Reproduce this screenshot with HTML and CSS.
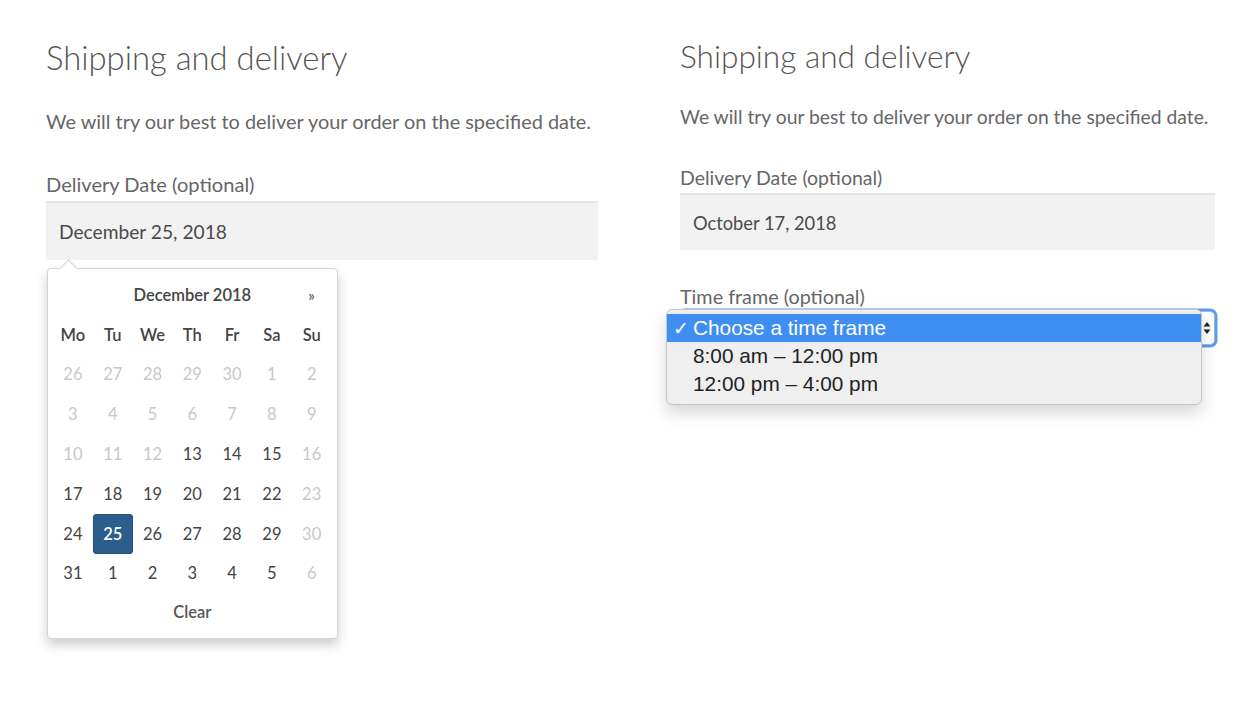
FILE: index.html
```html
<!DOCTYPE html>
<html>
<head>
<meta charset="utf-8">
<link rel="stylesheet" href="styles.css">
</head>
<body>
<div class="page">
  <section class="panel panel-left">
    <h2 class="title">Shipping and delivery</h2>
    <p class="intro">We will try our best to deliver your order on the specified date.</p>
    <label class="field-label">Delivery Date (optional)</label>
    <div class="date-wrap">
      <div class="input">December 25, 2018</div>
      <div class="calendar">
        <div class="cal-grid">
          <span class="cal-nav"></span>
          <span class="cal-title">December 2018</span>
          <span class="cal-nav">»</span>
          <span class="dow">Mo</span><span class="dow">Tu</span><span class="dow">We</span><span class="dow">Th</span><span class="dow">Fr</span><span class="dow">Sa</span><span class="dow">Su</span>
          <span class="d off">26</span><span class="d off">27</span><span class="d off">28</span><span class="d off">29</span><span class="d off">30</span><span class="d off">1</span><span class="d off">2</span>
          <span class="d off">3</span><span class="d off">4</span><span class="d off">5</span><span class="d off">6</span><span class="d off">7</span><span class="d off">8</span><span class="d off">9</span>
          <span class="d off">10</span><span class="d off">11</span><span class="d off">12</span><span class="d">13</span><span class="d">14</span><span class="d">15</span><span class="d off">16</span>
          <span class="d">17</span><span class="d">18</span><span class="d">19</span><span class="d">20</span><span class="d">21</span><span class="d">22</span><span class="d off">23</span>
          <span class="d">24</span><span class="d sel">25</span><span class="d">26</span><span class="d">27</span><span class="d">28</span><span class="d">29</span><span class="d off">30</span>
          <span class="d">31</span><span class="d">1</span><span class="d">2</span><span class="d">3</span><span class="d">4</span><span class="d">5</span><span class="d off">6</span>
          <span class="cal-clear">Clear</span>
        </div>
      </div>
    </div>
  </section>
  <section class="panel panel-right">
    <h2 class="title title-sm">Shipping and delivery</h2>
    <p class="intro intro-sm">We will try our best to deliver your order on the specified date.</p>
    <label class="field-label label-sm">Delivery Date (optional)</label>
    <div class="input input-sm">October 17, 2018</div>
    <label class="field-label label-sm label-time">Time frame (optional)</label>
    <div class="select-wrap">
      <div class="select">
        <span class="select-arrows">
          <svg width="8" height="16" viewBox="0 0 8 16"><path d="M4 2 L7.5 6.5 H0.5 Z M4 14 L7.5 9.5 H0.5 Z" fill="#222"/></svg>
        </span>
      </div>
      <div class="dropdown">
        <div class="opt opt-active"><span class="check">✓</span>Choose a time frame</div>
        <div class="opt">8:00 am – 12:00 pm</div>
        <div class="opt">12:00 pm – 4:00 pm</div>
      </div>
    </div>
  </section>
</div>
</body>
</html>
```

FILE: styles.css
```css
html, body {
  margin: 0;
  padding: 0;
  background: #fff;
}
body {
  font-family: "Lato", "Open Sans", sans-serif;
  color: #555;
}
.page {
  display: grid;
  grid-template-columns: 634px 615px;
  height: 720px;
}
.panel-left {
  padding: 38px 36px 0 46px;
}
.panel-right {
  padding: 37px 34px 0 46px;
}
.title {
  margin: 0;
  font-weight: 300;
  font-size: 32.8px;
  line-height: 40px;
  color: #555;
}
.title-sm {
  font-size: 31.6px;
  line-height: 38px;
}
.intro {
  margin: 30px 0 0;
  font-size: 19.9px;
  line-height: 26px;
  color: #666;
}
.intro-sm {
  margin-top: 29px;
  font-size: 19.3px;
}
.field-label {
  display: block;
  margin-top: 37px;
  font-size: 20.1px;
  line-height: 26px;
  color: #666;
}
.label-sm {
  margin-top: 35px;
  font-size: 19.5px;
}
.label-time {
  margin-top: 33px;
  font-size: 19.8px;
}
.date-wrap {
  position: relative;
  margin-top: 4px;
}
.input {
  box-sizing: border-box;
  height: 59px;
  padding: 0 13px;
  display: flex;
  align-items: center;
  background: #f2f2f2;
  border-top: 2px solid #e6e6e6;
  font-size: 19.2px;
  color: #4a4a4a;
}
.input-sm {
  height: 57px;
  margin-top: 2px;
  font-size: 18.3px;
}
.calendar {
  position: absolute;
  left: 1px;
  top: 67px;
  width: 291px;
  box-sizing: border-box;
  padding: 6px 6px 5px 5px;
  background: #fff;
  border: 1px solid #d4d4d4;
  border-radius: 4px;
  box-shadow: 0 6px 12px rgba(0,0,0,0.2);
}
.calendar::before {
  content: "";
  position: absolute;
  left: 14px;
  top: -7px;
  width: 12px;
  height: 12px;
  background: #fff;
  border-left: 1px solid #d4d4d4;
  border-top: 1px solid #d4d4d4;
  transform: rotate(45deg);
}
.cal-grid {
  display: grid;
  grid-template-columns: repeat(7, 39.8px);
  grid-auto-rows: 39.8px;
  font-size: 16.5px;
  color: #444;
}
.cal-grid > span {
  display: flex;
  align-items: center;
  justify-content: center;
}
.cal-title {
  grid-column: span 5;
  font-weight: 600;
  color: #444;
}
.cal-nav {
  font-weight: 600;
  color: #666;
  font-size: 15px;
}
.dow {
  font-weight: 600;
  color: #444;
}
.d.off {
  color: #c8c8c8;
}
.d.sel {
  background: #2c5e8d;
  color: #fff;
  font-weight: 600;
  border-radius: 4px;
  box-shadow: inset 0 0 0 1px #26527c;
}
.cal-clear {
  grid-column: span 7;
  font-weight: 600;
  color: #555;
  height: 38px;
}
.select-wrap {
  position: relative;
  margin-top: 2px;
}
.select {
  height: 32px;
  border-radius: 5px;
  background: #fff;
  border: 1px solid #9db9e2;
  box-shadow: 0 0 0 2.5px #5a9bf2;
  display: flex;
  justify-content: flex-end;
  align-items: center;
  padding-right: 3px;
}
.select-arrows {
  display: flex;
}
.dropdown {
  position: absolute;
  left: -14px;
  top: -2px;
  width: 536px;
  box-sizing: border-box;
  padding: 4px 0 6px;
  background: #efeff0;
  border: 1px solid #c6c6c6;
  border-radius: 6px;
  box-shadow: 0 8px 16px rgba(0,0,0,0.16);
  font-family: "Liberation Sans", Arial, sans-serif;
  font-size: 20.8px;
  color: #222;
}
.opt {
  height: 28px;
  line-height: 28px;
  padding-left: 26px;
  position: relative;
}
.opt-active {
  background: #3f8ef2;
  color: #fff;
}
.check {
  position: absolute;
  left: 6px;
  font-size: 19px;
  font-family: "DejaVu Sans", sans-serif;
}
```
